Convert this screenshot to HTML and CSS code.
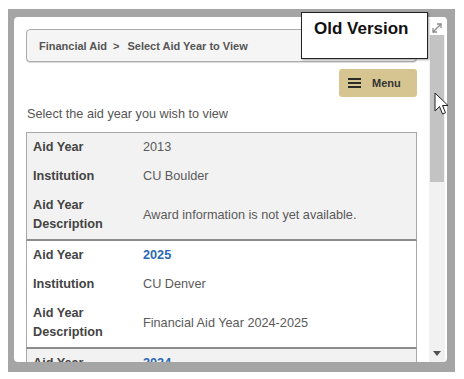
FILE: index.html
```html
<!DOCTYPE html>
<html>
<head>
<meta charset="utf-8">
<link rel="stylesheet" href="styles.css">
</head>
<body>
<div class="frame">
  <div class="panel">
    <div class="content">
      <div class="breadcrumb">
        <span>Financial Aid</span><span class="sep">&gt;</span><span>Select Aid Year to View</span>
      </div>
      <div class="menu-row">
        <button class="menu-btn">
          <span class="burger"><i></i><i></i><i></i></span>
          <span>Menu</span>
        </button>
      </div>
      <p class="intro">Select the aid year you wish to view</p>
      <div class="cards">
        <div class="card shaded">
          <div class="row"><span class="label">Aid Year</span><span class="value">2013</span></div>
          <div class="row"><span class="label">Institution</span><span class="value">CU Boulder</span></div>
          <div class="row"><span class="label">Aid Year<br>Description</span><span class="value">Award information is not yet available.</span></div>
        </div>
        <div class="card">
          <div class="row"><span class="label">Aid Year</span><span class="value link">2025</span></div>
          <div class="row"><span class="label">Institution</span><span class="value">CU Denver</span></div>
          <div class="row"><span class="label">Aid Year<br>Description</span><span class="value">Financial Aid Year 2024-2025</span></div>
        </div>
        <div class="card shaded">
          <div class="row"><span class="label">Aid Year</span><span class="value link">2024</span></div>
          <div class="row"><span class="label">Institution</span><span class="value">CU Denver</span></div>
        </div>
      </div>
    </div>
    <div class="scrollbar">
      <div class="sb-top">
        <svg width="12" height="12" viewBox="0 0 12 12">
          <path d="M2 10 L10 2" stroke="#8a8a8a" stroke-width="1.3" fill="none"/>
          <path d="M6 2 L10 2 L10 6" stroke="#8a8a8a" stroke-width="1.3" fill="none"/>
          <path d="M2 6 L2 10 L6 10" stroke="#8a8a8a" stroke-width="1.3" fill="none"/>
        </svg>
      </div>
      <div class="sb-thumb"></div>
      <div class="sb-track">
        <svg width="8" height="5" viewBox="0 0 8 5"><path d="M0 0 L8 0 L4 5 Z" fill="#505050"/></svg>
      </div>
    </div>
  </div>
</div>
<div class="old-version">Old Version</div>
<svg class="cursor" width="14" height="24" viewBox="0 0 14 24">
  <path d="M1 1 L1 19 L5.5 14.5 L8.5 22 L11.5 20.8 L8.5 13.5 L14 13.5 Z" fill="#fff" stroke="#222" stroke-width="1" stroke-linejoin="round"/>
</svg>
</body>
</html>
```

FILE: styles.css
```css
* { box-sizing: border-box; }
html, body { margin: 0; padding: 0; background: #fff; }
body {
  width: 464px;
  height: 379px;
  overflow: hidden;
  position: relative;
  font-family: "Liberation Sans", Arial, sans-serif;
}
.frame {
  margin: 9px 0 0 8px;
  width: 447px;
  height: 363px;
  background: #a5a5a5;
  padding: 8px 8px 10px 6px;
}
.panel {
  width: 433px;
  height: 345px;
  background: #fff;
  border-radius: 4px;
  display: flex;
  overflow: hidden;
}
.content {
  width: 415px;
  padding: 12px 12px 0 12px;
  overflow: hidden;
}
.breadcrumb {
  height: 33px;
  border: 1px solid #ababab;
  border-radius: 4px;
  background: #f5f5f5;
  box-shadow: 0 1px 1px rgba(0,0,0,0.15);
  display: flex;
  align-items: center;
  padding-left: 12px;
  font-size: 11px;
  font-weight: bold;
  color: #555;
}
.sep { margin: 0 8px 0 6px; }
.menu-row {
  display: flex;
  justify-content: flex-end;
  margin-top: 7px;
}
.menu-btn {
  width: 78px;
  height: 28px;
  border: none;
  border-radius: 3px;
  background: #d6c590;
  display: flex;
  align-items: center;
  padding: 0 0 0 9px;
  font-family: "Liberation Sans", Arial, sans-serif;
  font-size: 11px;
  font-weight: bold;
  color: #333;
  gap: 11px;
}
.burger {
  display: flex;
  flex-direction: column;
  gap: 2px;
  width: 13px;
}
.burger i {
  display: block;
  height: 2px;
  background: #2a2a2a;
}
.intro {
  margin: 9px 0 0 1px;
  font-size: 12.7px;
  line-height: 16px;
  color: #555;
}
.cards { margin-top: 10px; }
.card {
  border-left: 1px solid #a8a8a8;
  border-right: 1px solid #a8a8a8;
  border-bottom: 2px solid #8c8c8c;
  background: #fff;
}
.card:first-child { border-top: 1px solid #a8a8a8; }
.card.shaded { background: #f2f2f2; }
.row {
  display: grid;
  grid-template-columns: 110px 1fr;
  align-items: center;
  padding: 5px 0 5px 6px;
  font-size: 12.7px;
  line-height: 19px;
}
.label { font-weight: bold; color: #444; }
.value { color: #5a5a5a; }
.value.link { color: #2d69b2; font-weight: bold; }
.scrollbar {
  width: 16px;
  display: flex;
  flex-direction: column;
  background: #f1f1f1;
}
.sb-top {
  height: 18px;
  background: #fff;
  display: flex;
  justify-content: center;
  align-items: center;
  padding-top: 4px;
}
.sb-thumb {
  height: 147px;
  background: #c3c3c3;
  margin: 0 1px;
}
.sb-track {
  flex: 1;
  display: flex;
  align-items: flex-end;
  justify-content: center;
  padding-bottom: 6px;
}
.old-version {
  position: absolute;
  left: 301px;
  top: 12px;
  width: 127px;
  height: 47px;
  background: #fff;
  border: 1px solid #222;
  box-shadow: 1px 1px 2px rgba(0,0,0,0.35);
  font-size: 17px;
  font-weight: bold;
  color: #111;
  padding: 6px 0 0 12px;
  line-height: 20px;
}
.cursor {
  position: absolute;
  left: 434px;
  top: 92px;
}
```
